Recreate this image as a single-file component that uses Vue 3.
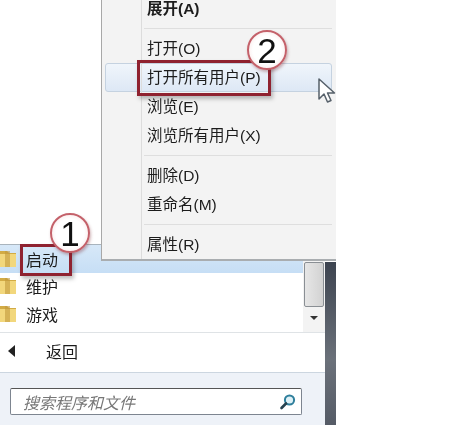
<script setup>
// 右键菜单项，null 表示分隔线
const menuItems = [
  { text: '展开(A)', bold: true },
  null,
  { text: '打开(O)' },
  { text: '打开所有用户(P)', hover: true },
  { text: '浏览(E)' },
  { text: '浏览所有用户(X)' },
  null,
  { text: '删除(D)' },
  { text: '重命名(M)' },
  null,
  { text: '属性(R)' }
]

const folders = ['启动', '维护', '游戏']
</script>

<template>
  <div class="page">
    <div class="start-panel">
      <div class="panel-main">
        <div class="list-area">
          <div class="list">
            <div
              v-for="(name, i) in folders"
              :key="name"
              class="folder-row"
              :class="{ active: i === 0 }"
            >
              <svg class="folder" width="18" height="20" viewBox="0 0 18 20">
                <path d="M-2 2h9l2 2h7v14H-2z" fill="#d2ab45" />
                <path d="M-2 5h18v13H-2z" fill="#f2d77c" />
                <path d="M5 2h5v16H5z" fill="#c19a3e" opacity="0.6" />
              </svg>
              <span>{{ name }}</span>
            </div>
          </div>
          <div class="scrollbar">
            <div class="thumb"></div>
            <div class="arrow-down"></div>
          </div>
        </div>
        <div class="back-row">
          <span class="back-arrow"></span>
          <span>返回</span>
        </div>
        <div class="search-area">
          <div class="search-box">
            <span class="placeholder">搜索程序和文件</span>
            <svg width="18" height="18" viewBox="0 0 18 18">
              <circle cx="10.5" cy="7" r="4.6" fill="#dff1f7" stroke="#2f7f9c" stroke-width="2" />
              <path d="M7 10.5L2.5 15" stroke="#27424f" stroke-width="2.6" stroke-linecap="round" />
            </svg>
          </div>
        </div>
      </div>
      <div class="dark-strip"></div>
    </div>

    <!-- 右键菜单 -->
    <div class="context-menu">
      <div class="gutter"></div>
      <div class="menu-list">
        <template v-for="(item, i) in menuItems" :key="i">
          <div v-if="!item" class="sep"></div>
          <div v-else class="menu-item" :class="{ bold: item.bold, hover: item.hover }">{{ item.text }}</div>
        </template>
      </div>
    </div>

    <!-- 标注 -->
    <div class="red-box box-one"></div>
    <div class="red-box box-two"></div>
    <div class="badge badge-one">1</div>
    <div class="badge badge-two">2</div>

    <svg class="cursor" width="20" height="28" viewBox="0 0 20 28">
      <path d="M2 2v20l5-5 3.5 8 3.5-1.5-3.5-7.5h7z" fill="#fff" stroke="#56606a" stroke-width="1.5" stroke-linejoin="round" />
    </svg>
  </div>
</template>

<style>
html,
body {
  margin: 0;
  background: #fff;
}
</style>

<style scoped>
.page {
  position: relative;
  width: 455px;
  height: 425px;
  overflow: hidden;
  background: #fff;
  padding-top: 244px;
  box-sizing: border-box;
  font-family: "Liberation Sans", "Noto Sans CJK SC", sans-serif;
  color: #1c1c1c;
  filter: blur(0.5px);
}

.start-panel {
  display: flex;
  width: 336px;
  height: 181px;
}

.panel-main {
  width: 325px;
  display: flex;
  flex-direction: column;
}

.list-area {
  display: flex;
  height: 88px;
  border-bottom: 1px solid #dfe3e6;
}

.list {
  flex: 1;
  min-width: 0;
}

.folder-row {
  display: flex;
  align-items: center;
  gap: 8px;
  height: 28px;
  margin-top: -1px;
  margin-bottom: 1px;
  font-size: 16px;
}

.folder-row.active {
  height: 29px;
  margin-top: 0;
  margin-bottom: 0;
  background: linear-gradient(180deg, #d7e8f8, #c6def5);
  border-top: 1px solid #a9b4bd;
  box-sizing: border-box;
}

.folder {
  flex: none;
}

.scrollbar {
  width: 22px;
  background: #f3f3f3;
  padding-top: 18px;
  box-sizing: border-box;
}

.thumb {
  height: 43px;
  margin: 0 1px;
  border: 1px solid #8a8f94;
  border-radius: 2px;
  background: linear-gradient(90deg, #e6e6e6, #d2d2d2);
}

.arrow-down {
  width: 0;
  margin: 9px auto 0;
  border-left: 4px solid transparent;
  border-right: 4px solid transparent;
  border-top: 4px solid #333;
}

.back-row {
  display: flex;
  align-items: center;
  height: 40px;
  padding: 0 0 4px 8px;
  font-size: 16px;
  border-bottom: 1px solid #ccd6e0;
  box-sizing: border-box;
}

.back-arrow {
  width: 0;
  margin-right: 31px;
  border-top: 6px solid transparent;
  border-bottom: 6px solid transparent;
  border-right: 7px solid #222;
}

.search-area {
  flex: 1;
  padding: 15px 23px 0 10px;
  background: #eef2f8;
}

.search-box {
  display: flex;
  align-items: center;
  justify-content: space-between;
  height: 27px;
  padding: 0 4px 0 12px;
  background: #fff;
  border: 1px solid #7d8590;
  border-top-color: #555;
  border-radius: 2px;
  box-sizing: border-box;
}

.placeholder {
  font-size: 16px;
  font-style: italic;
  color: #777;
}

.dark-strip {
  width: 11px;
  margin-top: 18px;
  background: linear-gradient(180deg, #3d4450, #6b717a 60%, #555b66);
}

.context-menu {
  position: absolute;
  left: 101px;
  top: 0;
  width: 235px;
  height: 261px;
  overflow: hidden;
  background: #f3f3f3;
  border-left: 1px solid #a8a8a8;
  border-bottom: 2px solid #a9adb0;
  box-sizing: border-box;
}

.gutter {
  position: absolute;
  left: 39px;
  top: 0;
  bottom: 0;
  width: 1px;
  background: #dcdcdc;
}

.menu-list {
  margin-top: -6px;
  padding: 0 4px 0 3px;
}

.menu-item {
  height: 29px;
  line-height: 29px;
  padding-left: 42px;
  font-size: 15.5px;
  white-space: nowrap;
}

.menu-item.bold {
  font-weight: 700;
}

.menu-item.hover {
  background: linear-gradient(180deg, #f0f5fb, #dde8f5);
  border: 1px solid #c5d2e0;
  border-radius: 3px;
  line-height: 27px;
  padding-left: 41px;
  box-sizing: border-box;
}

.sep {
  height: 1px;
  margin: 5px 0 5px 39px;
  background: #dedede;
}

.red-box {
  position: absolute;
  border: 3px solid #8f2230;
  box-sizing: border-box;
  box-shadow: 2px 3px 4px rgba(0, 0, 0, 0.25);
}

.box-one {
  left: 20px;
  top: 244px;
  width: 52px;
  height: 32px;
}

.box-two {
  left: 137px;
  top: 60px;
  width: 134px;
  height: 36px;
}

.badge {
  position: absolute;
  width: 40px;
  height: 40px;
  line-height: 38px;
  text-align: center;
  font-size: 35px;
  color: #111;
  background: radial-gradient(circle, #fff 55%, #f6dcdc 100%);
  border: 2px solid #c4616a;
  border-radius: 50%;
  box-sizing: border-box;
  box-shadow: 1px 2px 3px rgba(120, 40, 50, 0.35);
}

.badge-one {
  left: 50px;
  top: 213px;
}

.badge-two {
  left: 247px;
  top: 30px;
}

.cursor {
  position: absolute;
  left: 317px;
  top: 77px;
}
</style>
